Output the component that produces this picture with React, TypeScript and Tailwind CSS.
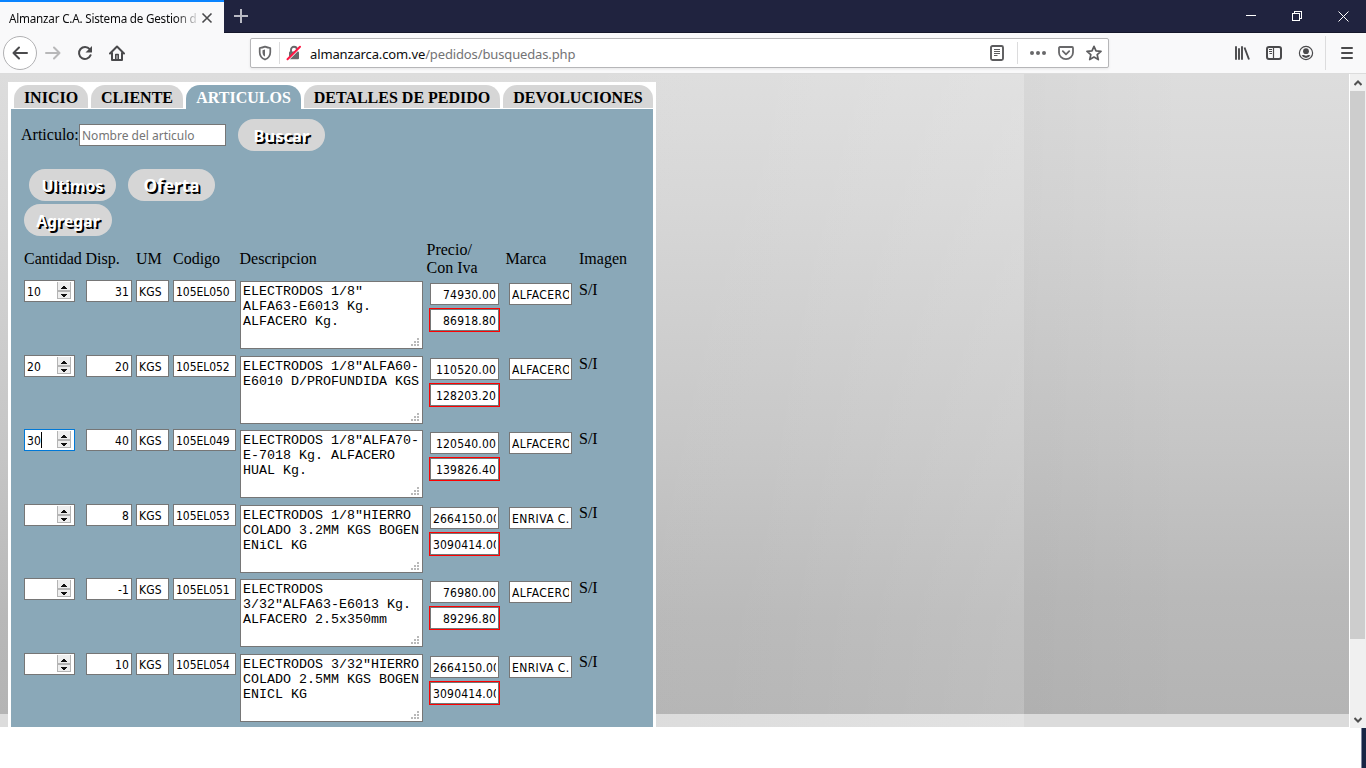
import React from 'react';

type Item = {
  qty: string;
  stock: string;
  code: string;
  lines: string[];
  price: string;
  priceTax: string;
  brand: string;
  focused?: boolean;
};

const items: Item[] = [
  { qty: '10', stock: '31', code: '105EL050', lines: ['ELECTRODOS 1/8"', 'ALFA63-E6013 Kg.', 'ALFACERO Kg.'], price: '74930.00', priceTax: '86918.80', brand: 'ALFACERO' },
  { qty: '20', stock: '20', code: '105EL052', lines: ['ELECTRODOS 1/8"ALFA60-', 'E6010 D/PROFUNDIDA KGS'], price: '110520.00', priceTax: '128203.20', brand: 'ALFACERO' },
  { qty: '30', stock: '40', code: '105EL049', lines: ['ELECTRODOS 1/8"ALFA70-', 'E-7018 Kg. ALFACERO', 'HUAL Kg.'], price: '120540.00', priceTax: '139826.40', brand: 'ALFACERO', focused: true },
  { qty: '', stock: '8', code: '105EL053', lines: ['ELECTRODOS 1/8"HIERRO', 'COLADO 3.2MM KGS BOGEN', 'ENiCL KG'], price: '2664150.00', priceTax: '3090414.00', brand: 'ENRIVA C.' },
  { qty: '', stock: '-1', code: '105EL051', lines: ['ELECTRODOS', '3/32"ALFA63-E6013 Kg.', 'ALFACERO 2.5x350mm'], price: '76980.00', priceTax: '89296.80', brand: 'ALFACERO' },
  { qty: '', stock: '10', code: '105EL054', lines: ['ELECTRODOS 3/32"HIERRO', 'COLADO 2.5MM KGS BOGEN', 'ENICL KG'], price: '2664150.00', priceTax: '3090414.00', brand: 'ENRIVA C.' },
];

function TabStrip() {
  return (
    <div className="flex h-[33px] shrink-0 bg-[#20233f]">
      <div className="flex w-[224px] items-center border-t-2 border-[#0a84ff] bg-[#f9f9fa] pl-[9px]">
        <div className="w-[188px] overflow-hidden whitespace-nowrap text-[11.700px] leading-[18px] tracking-[-0.220px] text-[#0c0c0d] [mask-image:linear-gradient(to_right,black_166px,transparent_192px)]">
          Almanzar C.A. Sistema de Gestion d
        </div>
        <svg className="ml-[4px] h-3 w-3" viewBox="0 0 12 12" fill="none" stroke="#4a4a4c" strokeWidth="1.6">
          <path d="M1.5 1.5l9 9M10.5 1.5l-9 9" />
        </svg>
      </div>
      <div className="flex grow items-start border-b border-[#15172b] pl-[10px] pt-[9px]">
        <svg className="h-[14px] w-[14px]" viewBox="0 0 14 14" stroke="#b9bac4" strokeWidth="2">
          <path d="M0 7h14M7 0v14" />
        </svg>
      </div>
      <div className="flex items-start border-b border-[#15172b] pr-[17px] pt-[11px]">
        <svg className="mr-[36px] h-[10px] w-[10px]" viewBox="0 0 10 10" stroke="#fff" strokeWidth="1" shapeRendering="crispEdges">
          <path d="M0 4.5h10" />
        </svg>
        <svg className="mr-[36px] h-[10px] w-[10px]" viewBox="0 0 10 10" fill="none" stroke="#fff" strokeWidth="1" shapeRendering="crispEdges">
          <path d="M.5 2.500h7v7h-7zM2.500 2V.5h7v7H8" />
        </svg>
        <svg className="h-[11px] w-[11px]" viewBox="0 0 11 11" stroke="#fff" strokeWidth="1">
          <path d="M.5.5l10 10M10.500.5l-10 10" />
        </svg>
      </div>
    </div>
  );
}

function Toolbar() {
  return (
    <div className="flex h-[41px] shrink-0 items-start border-b border-[#dcdcdc] bg-[#f9f9fa] text-[#4a4a4c]">
      <div className="ml-[3px] mt-[3px] flex h-[34px] w-[34px] items-center justify-center rounded-full border border-[#b1b1b3] bg-white">
        <svg className="h-4 w-4" viewBox="0 0 16 16" fill="none" stroke="currentColor" strokeWidth="2" strokeLinecap="round" strokeLinejoin="round">
          <path d="M15 8H1.500M7 2.500L1.500 8 7 13.500" />
        </svg>
      </div>
      <svg className="ml-[8px] mt-[12px] h-4 w-4 text-[#b8b8b9]" viewBox="0 0 16 16" fill="none" stroke="currentColor" strokeWidth="2" strokeLinecap="round" strokeLinejoin="round">
        <path d="M1 8h13.500M9 2.500L14.500 8 9 13.500" />
      </svg>
      <svg className="ml-[16px] mt-[12px] h-4 w-4" viewBox="0 0 16 16" fill="none">
        <path d="M12.700 4.200A6 6 0 1 0 13.600 10.200" stroke="currentColor" strokeWidth="2" strokeLinecap="round" />
        <path d="M15 1v6a.5.5 0 0 1-.5.5h-6z" fill="currentColor" />
      </svg>
      <svg className="ml-[16px] mt-[12px] h-4 w-4" viewBox="0 0 16 16" fill="none" stroke="currentColor" strokeWidth="2" strokeLinecap="round" strokeLinejoin="round">
        <path d="M1 8.500L8 1.500l7 7M3 8v7h10V8" />
        <path d="M6.800 14.500V9.500h2.400v5" strokeWidth="1.600" />
      </svg>

      <div className="ml-[125px] mt-[5px] flex h-[30px] w-[859px] items-center rounded-[2px] border border-[#b6b6b8] bg-white shadow-[0_1px_3px_rgba(0,0,0,0.08)]">
        <svg className="ml-[6px] h-4 w-4" viewBox="0 0 16 16" fill="none" stroke="#68686a" strokeWidth="1.700">
          <path d="M8 1.600C6.200 2.300 4.300 2.800 2.700 3v4.200c0 3.600 2.200 6 5.300 7.400 3.100-1.400 5.300-3.800 5.300-7.400V3C11.700 2.800 9.800 2.300 8 1.600z" strokeLinejoin="round" />
          <path d="M8 4.500L5.500 5.200v2.200c0 1.900.9 3.200 2.500 4.200z" fill="#68686a" stroke="none" />
        </svg>
        <div className="ml-[6px] h-[22px] w-px bg-[#dcdcdd]" />
        <svg className="ml-[6px] h-4 w-4" viewBox="0 0 16 16" fill="none">
          <path d="M5 7V4.800a3 3 0 0 1 6 0V7" stroke="#68686a" strokeWidth="1.900" />
          <rect x="3" y="6.600" width="10" height="7.600" rx="1" fill="#68686a" />
          <path d="M1.800 15.300L14.800 2.300" stroke="#fff" strokeWidth="1.600" />
          <path d="M1.500 14.300L14 1.800" stroke="#ff1744" strokeWidth="2" strokeLinecap="round" />
        </svg>
        <div className="ml-[8px] mt-[2px] whitespace-nowrap font-['Noto_Sans'] text-[13px] leading-[20px] tracking-[-0.130px] text-[#0c0c0d]">
          almanzarca.com.ve<span className="text-[#737375]">/pedidos/busquedas.php</span>
        </div>
        <svg className="ml-auto h-4 w-4" viewBox="0 0 16 16" fill="none" stroke="#5c5c5e">
          <rect x="2" y="1" width="12" height="14" rx="1.500" strokeWidth="1.900" />
          <path d="M5 4.500h6M5 6.500h6M5 8.500h6M5 10.500h3.500" strokeWidth="1" />
        </svg>
        <div className="ml-[12px] h-[22px] w-px bg-[#dcdcdd]" />
        <svg className="ml-[12px] h-4 w-4" viewBox="0 0 16 16" fill="#68686a">
          <circle cx="2" cy="8" r="2" /><circle cx="8" cy="8" r="2" /><circle cx="14" cy="8" r="2" />
        </svg>
        <svg className="ml-[12px] h-4 w-4" viewBox="0 0 16 16" fill="none" stroke="#68686a" strokeWidth="1.800" strokeLinecap="round" strokeLinejoin="round">
          <path d="M1.900 2h12.200a.9.9 0 0 1 .9.9V7.500a7 6.600 0 0 1-14 0V2.900a.9.9 0 0 1 .9-.9z" />
          <path d="M4.800 6.200L8 9.300l3.200-3.100" />
        </svg>
        <svg className="ml-[12px] mr-[6px] h-4 w-4" viewBox="0 0 16 16" fill="none" stroke="#5c5c5e" strokeWidth="1.700" strokeLinejoin="round">
          <path d="M8 1.300l2 4.600 5 .5-3.800 3.300 1.100 4.900L8 12.100l-4.300 2.500 1.100-4.900L1 6.400l5-.5z" />
        </svg>
      </div>

      <svg className="ml-[125px] mt-[12px] h-4 w-4" viewBox="0 0 16 16" fill="none" stroke="currentColor" strokeWidth="1.900">
        <path d="M2 1.200v13.600M5 3.200v11.600M8 1.200v13.600M10.500 2.500l4.500 12" />
      </svg>
      <svg className="ml-[16px] mt-[12px] h-4 w-4" viewBox="0 0 16 16" fill="none" stroke="currentColor">
        <rect x="1" y="2" width="14" height="12" rx="2" strokeWidth="2" />
        <path d="M7.500 2v12" strokeWidth="1.200" />
        <path d="M3 4.500h3M3 6.500h3M3.500 8.500H6" strokeWidth="1" />
      </svg>
      <svg className="ml-[16px] mt-[12px] h-4 w-4" viewBox="0 0 16 16" fill="none">
        <circle cx="8" cy="8" r="6.600" stroke="currentColor" strokeWidth="1.200" />
        <circle cx="8" cy="6.200" r="2.900" fill="currentColor" />
        <path d="M3.600 10.200c1 .2 1.500-.2 2.400-.1 1.200.7 2.800.7 4 0 .9-.1 1.400.3 2.400.1A5 5 0 0 1 8 13a5 5 0 0 1-4.400-2.800z" fill="currentColor" />
      </svg>
      <div className="ml-[11px] mt-[3px] h-[34px] w-px bg-[#dcdcdd]" />
      <svg className="ml-[13px] mt-[12px] h-4 w-4" viewBox="0 0 16 16" fill="none" stroke="currentColor" strokeWidth="2" strokeLinecap="round">
        <path d="M3 3h10M3 8h10M3 13h10" />
      </svg>
    </div>
  );
}

const tabs = [
  { label: 'INICIO', box: 'w-[74px] h-[23px] bg-[#d6d6d6] text-black' },
  { label: 'CLIENTE', box: 'w-[92px] h-[23px] bg-[#d6d6d6] text-black' },
  { label: 'ARTICULOS', box: 'w-[115px] h-[24px] pb-px bg-[#8aa8b8] text-white' },
  { label: 'DETALLES DE PEDIDO', box: 'w-[196px] h-[23px] bg-[#d6d6d6] text-black' },
  { label: 'DEVOLUCIONES', box: 'w-[150px] h-[23px] bg-[#d6d6d6] text-black' },
];

function PillButton({ label, className }: { label: string; className: string }) {
  return (
    <button className={'flex h-[32px] items-center justify-center whitespace-nowrap rounded-[16px] bg-[#d6d6d6] pt-[2px] font-["Noto_Sans"] font-bold leading-none text-white ' + className}>
      {label}
    </button>
  );
}

function Field({ value, className }: { value: string; className: string }) {
  return (
    <div className={'h-[22px] overflow-hidden border border-[#767676] bg-white px-[2px] text-black ' + className}>
      <div className="overflow-hidden whitespace-nowrap pt-px font-['DejaVu_Sans_Condensed','DejaVu_Sans'] text-[12px] leading-[20px] [font-stretch:condensed]">{value}</div>
    </div>
  );
}

function QuantityField({ value, focused }: { value: string; focused?: boolean }) {
  return (
    <div className={'flex h-[22px] w-[51px] items-center border bg-white pl-[2px] pr-[3px] ' + (focused ? 'border-[#0078d7]' : 'border-[#767676]')}>
      <span className="pt-[2px] font-['DejaVu_Sans_Condensed','DejaVu_Sans'] text-[12px] leading-[18px] tracking-[0.100px] [font-stretch:condensed]">{value}</span>
      {focused && <span className="h-[16px] w-px bg-black" />}
      <svg className="mb-px ml-auto h-[17px] w-[14px]" viewBox="0 0 14 17" shapeRendering="crispEdges">
        <rect width="14" height="17" fill="#b4b4b4" />
        <rect x="1" width="12" height="8" fill="#eeeeee" />
        <rect x="1" y="10" width="12" height="6" fill="#eeeeee" />
        <path d="M6 4h2v1h1v1h1v1H4V6h1V5h1zM5 12h5v1H9v1H8v1H6v-1H5v-1H4v-1z" fill="#111" />
      </svg>
    </div>
  );
}

function DescriptionBox({ lines }: { lines: string[] }) {
  return (
    <div className="relative mt-px h-[68px] w-[183px] border border-[#767676] bg-white px-[2px] pt-[2px] font-['Liberation_Mono'] text-[13.333px] leading-[15px] text-black">
      {lines.map((line) => (
        <div key={line} className="whitespace-nowrap">{line}</div>
      ))}
      <svg className="absolute bottom-[2px] right-[3px] h-[8px] w-[8px]" viewBox="0 0 8 8" fill="#b9b9b9" shapeRendering="crispEdges">
        <path d="M6 0h2v2H6zM3 3h2v2H3zM6 3h2v2H6zM0 6h2v2H0zM3 6h2v2H3zM6 6h2v2H6z" />
      </svg>
    </div>
  );
}

const columns = 'grid grid-cols-[62px_50px_37px_67px_189px_80px_70px_70px]';

function ItemRow({ item }: { item: Item }) {
  return (
    <div className={columns + ' h-[74.5px] items-start'}>
      <QuantityField value={item.qty} focused={item.focused} />
      <Field value={item.stock} className="w-[46px] text-right tracking-[0.100px]" />
      <Field value="KGS" className="w-[33px] tracking-[0.100px]" />
      <Field value={item.code} className="w-[63px] tracking-[-0.050px]" />
      <DescriptionBox lines={item.lines} />
      <div className="flex flex-col gap-[3px] pt-[3px]">
        <Field value={item.price} className="ml-px w-[69px] text-right tracking-[0.180px]" />
        <div className="h-[24px] w-[71px] border border-[#f00]">
          <Field value={item.priceTax} className="w-[69px] text-right tracking-[0.180px]" />
        </div>
      </div>
      <Field value={item.brand} className="mt-[3px] w-[63px] tracking-[0.400px]" />
      <div className="pt-[0.900px] text-[16px] leading-[18px] text-black">S/I</div>
    </div>
  );
}

function Page() {
  return (
    <div className="relative h-[653px] grow overflow-hidden bg-[#dcdcdc]">
      <div className="flex h-full flex-col">
        <div className="flex h-[640px] shrink-0">
          <div className="w-[1024px] bg-[linear-gradient(to_right,rgba(255,255,255,0)_50%,rgba(255,255,255,0.04)_75%,rgba(255,255,255,0.13)_100%),linear-gradient(to_bottom,#dddddd_0%,#d6d6d6_20%,#c5c5c5_60%,#b8b8b8_85%,#b4b4b4_100%)]" />
          <div className="grow bg-[linear-gradient(to_right,rgba(0,0,0,0.025),rgba(0,0,0,0)_50%),linear-gradient(to_bottom,#dddddd_0%,#d6d6d6_22%,#c6c6c6_57%,#b9b9b9_82%,#b4b4b4_100%)]" />
        </div>
        <div className="flex grow">
          <div className="w-[1024px] bg-[linear-gradient(to_right,#dcdcdc_60%,#e2e2e2)]" />
          <div className="grow bg-[#dbdbdb]" />
        </div>
      </div>
      <div className="absolute left-[8px] top-[8px] h-[645px] w-[648px] bg-white px-[3px] pt-[3px] font-['Liberation_Serif']">
        <nav className="flex h-[24px] gap-[3px] pl-[3px]">
          {tabs.map((tab) => (
            <div key={tab.label} className={'flex items-center justify-center whitespace-nowrap rounded-t-[14px] pt-[3px] text-[16px] font-bold leading-[20px] ' + tab.box}>
              {tab.label}
            </div>
          ))}
        </nav>
        <div className="h-[618px] overflow-hidden bg-[#8aa8b8] pl-[10px] pt-[10px] text-[16px] leading-[18px] text-black">
          <div className="flex h-[32px] items-center">
            <label className="w-[58px] whitespace-nowrap">Articulo:</label>
            <div className="h-[22px] w-[147px] whitespace-nowrap border border-[#767676] bg-white pl-[2px] pt-px font-['Noto_Sans'] text-[12px] leading-[20px] text-[#757575]">Nombre del articulo</div>
            <PillButton label="Buscar" className="ml-[12px] w-[87px] text-[16.500px] [text-shadow:2px_2px_0_#000]" />
          </div>
          <div className="mt-[18px] flex gap-[12px] pl-[8px]">
            <PillButton label="Ultimos" className="w-[87px] text-[16px] [text-shadow:1px_1px_0_#000,2px_2px_0_#000]" />
            <PillButton label="Oferta" className="w-[87px] text-[17.200px] [text-shadow:2px_2px_0_#000]" />
          </div>
          <div className="mt-[3px] pl-[3px]">
            <PillButton label="Agregar" className="w-[88px] pt-[3px] text-[15.800px] [text-shadow:2px_2px_0_#000]" />
          </div>
          <div className="pl-[3px]">
            <div className={columns + ' h-[44px] items-center whitespace-nowrap pt-[2px]'}>
              <div>Cantidad</div>
              <div className="-ml-[0.500px]">Disp.</div>
              <div>UM</div>
              <div>Codigo</div>
              <div className="-ml-[0.500px]">Descripcion</div>
              <div className="-ml-[2.500px]">Precio/<br />Con Iva</div>
              <div className="-ml-[3.500px]">Marca</div>
              <div>Imagen</div>
            </div>
            {items.map((item) => (
              <ItemRow key={item.code} item={item} />
            ))}
          </div>
        </div>
      </div>
    </div>
  );
}

function Scrollbar() {
  return (
    <div className="flex h-[654px] w-[17px] shrink-0 flex-col border-l border-white bg-[#f0f0f0]">
      <div className="flex h-[17px] items-center justify-center">
        <svg className="h-[6px] w-[8px]" viewBox="0 0 8 6" fill="none" stroke="#505050" strokeWidth="2"><path d="M.5 5L4 1.500 7.500 5" /></svg>
      </div>
      <div className="h-[548px] w-[15px] bg-[#cdcdcd]" />
      <div className="flex grow items-end justify-center pb-[5px]">
        <svg className="h-[6px] w-[8px]" viewBox="0 0 8 6" fill="none" stroke="#505050" strokeWidth="2"><path d="M.5 1L4 4.500 7.500 1" /></svg>
      </div>
    </div>
  );
}

export default function App() {
  return (
    <div className="flex h-[768px] w-[1366px] flex-col overflow-hidden bg-white font-['Noto_Sans',sans-serif]">
      <TabStrip />
      <Toolbar />
      <div className="flex h-[654px] shrink-0">
        <Page />
        <Scrollbar />
      </div>
      <div className="flex grow justify-end">
        <div className="w-[5px] border-l border-[#8088a0] bg-[#172544]" />
      </div>
    </div>
  );
}
